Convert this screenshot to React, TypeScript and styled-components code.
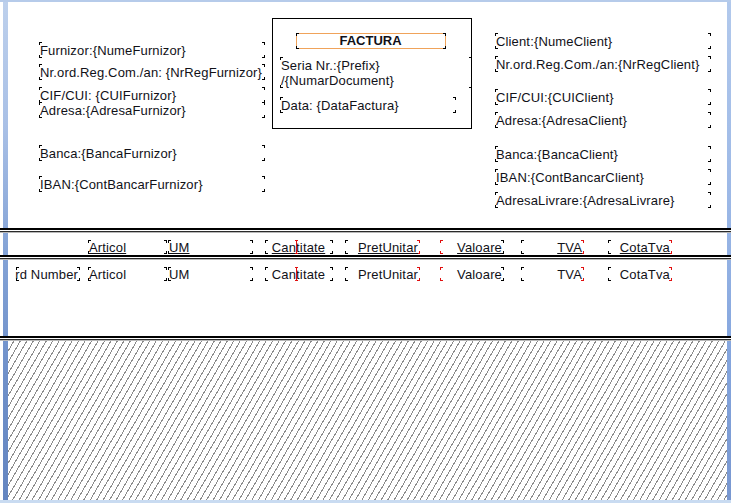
import React from "react";
import styled, { createGlobalStyle, css } from "styled-components";

const Global = createGlobalStyle`
  html, body { margin: 0; padding: 0; background: #fff; overflow: hidden; }
  #root { width: 731px; height: 503px; }
`;

const STRIP_LEFT = "linear-gradient(to bottom, #bdd0ec 0%, #a9c0e6 25%, #84a3d6 50%, #6f90c9 75%, #6485c0 100%)";
const STRIP_RIGHT = "linear-gradient(to bottom, #b2c9ec 0%, #9cb8e6 40%, #85a6de 70%, #7897d0 100%)";

const Page = styled.div`
  position: relative;
  width: 731px;
  height: 503px;
  display: flex;
  flex-direction: column;
  background:
    ${STRIP_LEFT} 3px 0 / 5px 100% no-repeat,
    ${STRIP_RIGHT} 727px 0 / 4px 100% no-repeat,
    #fff;
  font-family: "Liberation Sans", Arial, sans-serif;
  color: #111118;
`;

const TopBar = styled.div`
  height: 2px;
  flex: none;
  background: #b6cbea;
`;

const BottomBar = styled.div`
  height: 3px;
  flex: none;
  background: #c9dbf1;
`;

const Band = styled.div<{ $h: number }>`
  position: relative;
  flex: none;
  height: ${(p) => p.$h}px;
  margin: 0 4px 0 8px;
  background: #fff;
`;

const Separator = styled.div`
  flex: none;
  height: 5px;
  background: linear-gradient(
    to bottom,
    #000 0 2px,
    #fff 2px 3px,
    #2a2a2a 3px 4px,
    #b8b8b8 4px 5px
  );
`;

const Hatch = styled.div`
  flex: 1;
  margin: 0 4px 0 8px;
  background:
    repeating-linear-gradient(
      120deg,
      transparent 0 4.6px,
      #8c8c8c 4.6px 5.6px
    ),
    #fff;
`;

const corners = (l: string, r: string) => `
  linear-gradient(${l},${l}) left top / 3px 1px no-repeat,
  linear-gradient(${l},${l}) left top / 1px 3px no-repeat,
  linear-gradient(${l},${l}) left bottom / 3px 1px no-repeat,
  linear-gradient(${l},${l}) left bottom / 1px 3px no-repeat,
  linear-gradient(${r},${r}) right top / 3px 1px no-repeat,
  linear-gradient(${r},${r}) right top / 1px 3px no-repeat,
  linear-gradient(${r},${r}) right bottom / 3px 1px no-repeat,
  linear-gradient(${r},${r}) right bottom / 1px 3px no-repeat
`;

const ORANGE = "#f0a35a";
const orangeEdges = `,
  linear-gradient(${ORANGE},${ORANGE}) left top / 100% 1px no-repeat,
  linear-gradient(${ORANGE},${ORANGE}) left bottom / 100% 1px no-repeat,
  linear-gradient(${ORANGE},${ORANGE}) left top / 1px 100% no-repeat,
  linear-gradient(${ORANGE},${ORANGE}) right top / 1px 100% no-repeat
`;

type Align = "left" | "center" | "right";

const Control = styled.div<{
  $x: number;
  $y: number;
  $w: number;
  $h: number;
  $align?: Align;
  $lc?: string;
  $rc?: string;
  $ty?: number;
  $lh?: number;
  $u?: boolean;
  $bold?: boolean;
  $outline?: boolean;
  $wrap?: boolean;
}>`
  position: absolute;
  box-sizing: border-box;
  left: ${(p) => p.$x}px;
  top: ${(p) => p.$y}px;
  width: ${(p) => p.$w}px;
  height: ${(p) => p.$h}px;
  padding: ${(p) => p.$ty ?? 1}px 2px 0 1px;
  display: flex;
  flex-direction: column;
  align-items: ${(p) =>
    p.$align === "center" ? "center" : p.$align === "right" ? "flex-end" : "flex-start"};
  font-size: 13px;
  line-height: ${(p) => p.$lh ?? 15}px;
  letter-spacing: 0.15px;
  white-space: ${(p) => (p.$wrap ? "normal" : "nowrap")};
  overflow: visible;
  ${(p) =>
    p.$bold &&
    css`
      font-weight: bold;
      letter-spacing: 0;
    `}
  ${(p) =>
    p.$u &&
    css`
      text-decoration: underline;
      text-underline-offset: 1px;
    `}
  background: ${(p) => corners(p.$lc ?? "#000", p.$rc ?? "#000") + (p.$outline ? orangeEdges : "")};
`;

const Panel = styled.div`
  position: absolute;
  box-sizing: border-box;
  left: 264px;
  top: 16px;
  width: 200px;
  height: 111px;
  border: 1px solid #000;
`;

const Marker = styled.div<{ $x: number; $y: number }>`
  position: absolute;
  left: ${(p) => p.$x}px;
  top: ${(p) => p.$y}px;
  width: 3px;
  height: 14px;
  background:
    linear-gradient(#e01010, #e01010) center top / 1px 100% no-repeat,
    linear-gradient(#e01010, #e01010) left top / 3px 1px no-repeat,
    linear-gradient(#e01010, #e01010) left bottom / 3px 1px no-repeat;
`;

const RED = "#e01010";

type Field = { y: number; t: string };

const supplier: Field[] = [
  { y: 40, t: "Furnizor:{NumeFurnizor}" },
  { y: 62, t: "Nr.ord.Reg.Com./an: {NrRegFurnizor}" },
  { y: 85, t: "CIF/CUI: {CUIFurnizor}" },
  { y: 100, t: "Adresa:{AdresaFurnizor}" },
  { y: 143, t: "Banca:{BancaFurnizor}" },
  { y: 174, t: "IBAN:{ContBancarFurnizor}" },
];

const client: Field[] = [
  { y: 31, t: "Client:{NumeClient}" },
  { y: 54, t: "Nr.ord.Reg.Com./an:{NrRegClient}" },
  { y: 87, t: "CIF/CUI:{CUIClient}" },
  { y: 110, t: "Adresa:{AdresaClient}" },
  { y: 144, t: "Banca:{BancaClient}" },
  { y: 167, t: "IBAN:{ContBancarClient}" },
  { y: 190, t: "AdresaLivrare:{AdresaLivrare}" },
];

type Col = { x: number; w: number; t: string; align: Align; lc?: string; rc?: string };

const columns: Col[] = [
  { x: 80, w: 79, t: "Articol", align: "left" },
  { x: 160, w: 85, t: "UM", align: "left" },
  { x: 257, w: 68, t: "Cantitate", align: "center" },
  { x: 337, w: 75, t: "PretUnitar", align: "right", rc: RED },
  { x: 432, w: 64, t: "Valoare", align: "right", lc: RED },
  { x: 513, w: 63, t: "TVA", align: "right", rc: RED },
  { x: 600, w: 64, t: "CotaTva", align: "right", rc: RED },
];

export default function App() {
  return (
    <Page>
      <Global />
      <TopBar />
      <Band $h={226}>
        {supplier.map((f) => (
          <Control key={f.t} $x={31} $y={f.y} $w={226} $h={16}>
            {f.t}
          </Control>
        ))}
        <Panel>
          <Control $x={23} $y={14} $w={150} $h={16} $align="center" $ty={0} $bold $outline>
            FACTURA
          </Control>
          <Control $x={7} $y={38} $w={192} $h={31} $ty={2} $lh={14.5} $wrap>
            <span>Seria Nr.:{"{Prefix}"}</span>
            <span>/{"{NumarDocument}"}</span>
          </Control>
          <Control $x={7} $y={78} $w={176} $h={16}>
            Data: {"{DataFactura}"}
          </Control>
        </Panel>
        {client.map((f) => (
          <Control key={f.t} $x={487} $y={f.y} $w={216} $h={16}>
            {f.t}
          </Control>
        ))}
      </Band>
      <Separator />
      <Band $h={22}>
        {columns.map((c) => (
          <Control
            key={c.t}
            $x={c.x}
            $y={7}
            $w={c.w}
            $h={14}
            $ty={0}
            $align={c.align}
            $lc={c.lc}
            $rc={c.rc}
            $u
          >
            {c.t}
          </Control>
        ))}
        <Marker $x={287} $y={7} />
      </Band>
      <Separator />
      <Band $h={76}>
        <Control $x={8} $y={7} $w={64} $h={14} $ty={0} $align="right">
          rd Number
        </Control>
        {columns.map((c) => (
          <Control
            key={c.t}
            $x={c.x}
            $y={7}
            $w={c.w}
            $h={14}
            $ty={0}
            $align={c.align}
            $lc={c.lc}
            $rc={c.rc}
          >
            {c.t}
          </Control>
        ))}
        <Marker $x={287} $y={7} />
      </Band>
      <Separator />
      <Hatch />
      <BottomBar />
    </Page>
  );
}
